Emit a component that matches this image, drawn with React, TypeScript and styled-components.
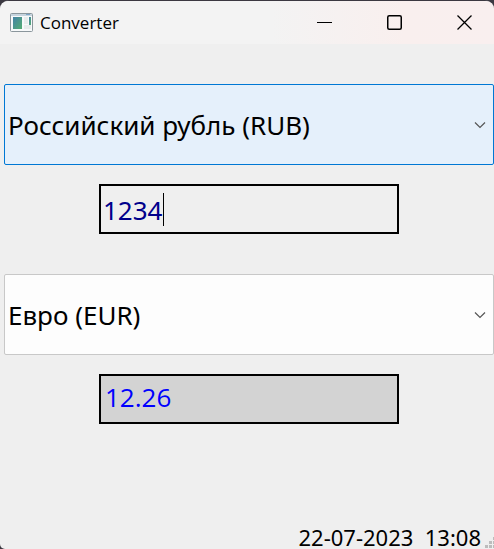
import React, { useState } from 'react';
import styled, { createGlobalStyle } from 'styled-components';

const GlobalStyle = createGlobalStyle`
  * { box-sizing: border-box; }
  body { margin: 0; background: #3b3841; }
  button, input, select, output { font: inherit; margin: 0; }
`;

const Window = styled.div`
  display: flex;
  flex-direction: column;
  min-height: 100vh;
  border-top: 1px solid #3b3841;
  border-radius: 9px 9px 0 5px;
  background: #efefef;
  color: #000;
  font-family: 'Noto Sans', 'Open Sans', sans-serif;
`;

const TitleBar = styled.header`
  display: flex;
  align-items: center;
  height: 43px;
  padding: 0 7px 0 10px;
  border-radius: 8px 8px 0 0;
  background: linear-gradient(90deg, #f3f3f3 55%, #f9efee 82%, #f9efef);
`;

const Title = styled.h1`
  flex: 1;
  margin: 0 0 0 7px;
  font-family: 'Open Sans', 'Noto Sans', sans-serif;
  font-size: 17px;
  line-height: 24px;
  font-weight: 400;
`;

const CaptionButtons = styled.div`
  display: flex;
  gap: 24px;
`;

const CaptionButton = styled.button`
  display: flex;
  align-items: center;
  justify-content: center;
  width: 46px;
  height: 42px;
  padding: 0;
  border: 0;
  background: transparent;
`;

const Form = styled.form`
  display: flex;
  flex: 1;
  flex-direction: column;
  gap: 40px;
  padding: 40px 0 0 4px;
`;

const Currency = styled.div`
  display: flex;
  flex-direction: column;
  align-items: center;
  gap: 19px;
`;

const SelectBox = styled.div<{ $active?: boolean }>`
  display: grid;
  align-items: center;
  width: 100%;
  height: 81px;
  border: 1px solid ${(p) => (p.$active ? '#0078d4' : '#c8c8c8')};
  border-radius: 2px;
  background: ${(p) => (p.$active ? '#e5f0fb' : '#fdfdfd')};
  & > * { grid-area: 1 / 1; }
  & > svg { justify-self: end; margin-right: 7px; pointer-events: none; }
`;

const Select = styled.select`
  width: 100%;
  height: 79px;
  padding: 0 24px 0 3px;
  border: 0;
  outline: 0;
  appearance: none;
  background: transparent;
  color: #000;
  font-size: 26px;
`;

const AmountBox = styled.label`
  display: flex;
  align-items: center;
  width: 300px;
  max-width: 100%;
  height: 50px;
  padding-left: 2px;
  border: 2px solid #000;
  cursor: text;
`;

const AmountInput = styled.input`
  field-sizing: content;
  max-width: 280px;
  height: 40px;
  padding: 2px 0 0;
  border: 0;
  outline: 0;
  background: transparent;
  color: #00008b;
  caret-color: transparent;
  font-size: 26px;
  line-height: 38px;
`;

const Caret = styled.span`
  width: 1px;
  height: 33px;
  background: #000;
`;

const Result = styled.output`
  width: 300px;
  max-width: 100%;
  height: 50px;
  padding: 0 4px;
  border: 2px solid #000;
  background: #d3d3d3;
  color: #0000ff;
  font-family: 'Open Sans', 'Noto Sans', sans-serif;
  font-size: 26px;
  line-height: 42px;
`;

const StatusBar = styled.footer`
  display: flex;
  align-items: flex-end;
  justify-content: flex-end;
  gap: 4px;
  font-size: 22px;
  line-height: 24px;
`;

const Clock = styled.time`
  white-space: pre;
`;

const Chevron = () => (
  <svg width="12" height="8" viewBox="0 0 12 8" fill="none" aria-hidden="true">
    <path d="M1 1.5 6 6.5 11 1.5" stroke="#555" strokeWidth="1.2" />
  </svg>
);

const AppIcon = () => (
  <svg width="23" height="19" viewBox="0 0 23 19" aria-hidden="true">
    <defs>
      <linearGradient id="pane" x1="0" y1="0" x2="1" y2="1">
        <stop offset="0" stopColor="#4482a6" />
        <stop offset="1" stopColor="#54ad72" />
      </linearGradient>
    </defs>
    <rect x=".5" y=".5" width="22" height="18" rx="1" fill="#f7f9fa" stroke="#8b969c" />
    <path d="M1 1h21v2H1z" fill="#c6d4de" />
    <path d="M16 1h4v1h-4z" fill="#7ca5c8" />
    <path d="M3 4h9v12H3z" fill="url(#pane)" />
    <path d="M14 4h4v7h-4zM14 12h7v4h-7z" fill="#e8ecec" />
    <path d="M19 4h2v8h-2z" fill="url(#pane)" />
  </svg>
);

const SizeGrip = () => (
  <svg width="9" height="12" viewBox="0 0 9 12" fill="#bcbcbc" aria-hidden="true">
    <path d="M8 0h1v3H8zM4 4h3v3H4zM8 4h1v3H8zM0 8h3v3H0zM4 8h3v3H4zM8 8h1v3H8z" />
  </svg>
);

const currencies = ['Российский рубль (RUB)', 'Евро (EUR)'];

function CurrencySelect({ label, initial, active }: { label: string; initial: string; active?: boolean }) {
  const [value, setValue] = useState(initial);
  return (
    <SelectBox $active={active}>
      <Select aria-label={label} value={value} onChange={(e) => setValue(e.target.value)}>
        {currencies.map((name) => <option key={name}>{name}</option>)}
      </Select>
      <Chevron />
    </SelectBox>
  );
}

export default function App() {
  const [amount, setAmount] = useState('1234');
  return (
    <>
      <GlobalStyle />
      <Window>
        <TitleBar>
          <AppIcon />
          <Title>Converter</Title>
          <CaptionButtons>
            <CaptionButton aria-label="Minimize">
              <svg width="15" height="15"><path d="M0 7.5h15" stroke="#000" /></svg>
            </CaptionButton>
            <CaptionButton aria-label="Maximize">
              <svg width="15" height="15">
                <rect x=".75" y=".75" width="13.5" height="13.5" rx="1.5" fill="none" stroke="#000" strokeWidth="1.5" />
              </svg>
            </CaptionButton>
            <CaptionButton aria-label="Close">
              <svg width="15" height="15"><path d="m.5.5 14 14m0-14-14 14" stroke="#000" strokeWidth="1.3" /></svg>
            </CaptionButton>
          </CaptionButtons>
        </TitleBar>
        <Form onSubmit={(e) => e.preventDefault()}>
          <Currency>
            <CurrencySelect label="From currency" initial={currencies[0]} active />
            <AmountBox>
              <AmountInput aria-label="Amount" value={amount} onChange={(e) => setAmount(e.target.value)} />
              <Caret />
            </AmountBox>
          </Currency>
          <Currency>
            <CurrencySelect label="To currency" initial={currencies[1]} />
            <Result aria-label="Converted amount">12.26</Result>
          </Currency>
        </Form>
        <StatusBar>
          <Clock dateTime="2023-07-22T13:08">{'22-07-2023  13:08'}</Clock>
          <SizeGrip />
        </StatusBar>
      </Window>
    </>
  );
}
